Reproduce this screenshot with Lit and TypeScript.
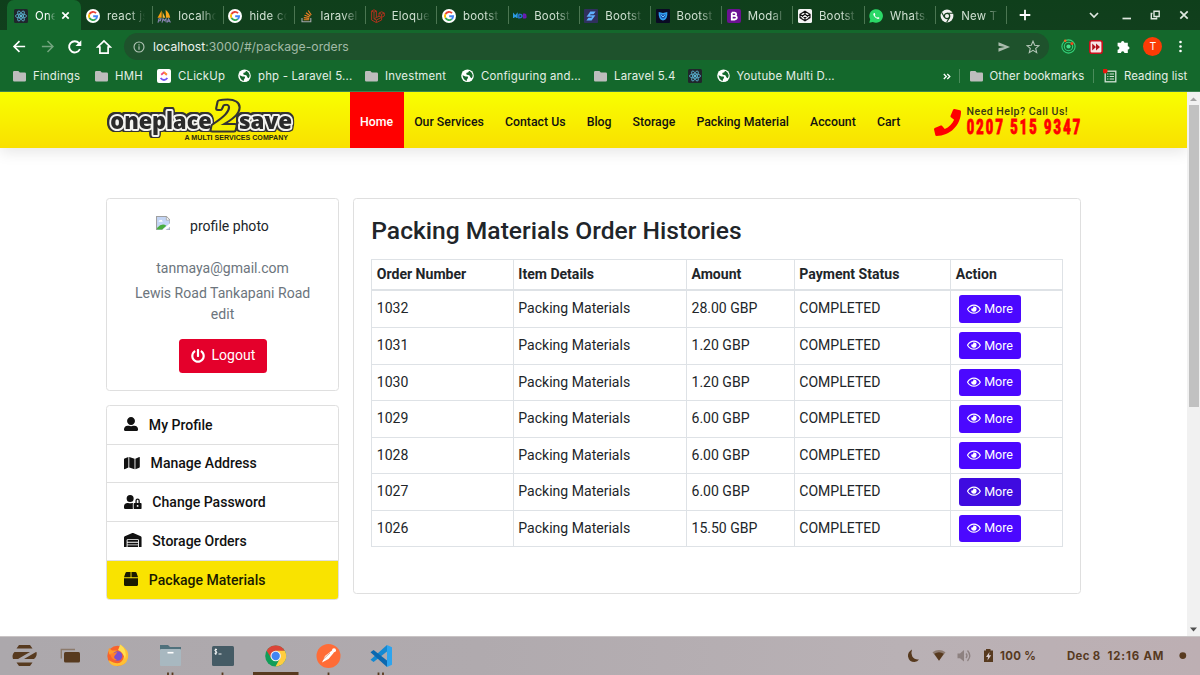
import { LitElement, html, css, svg } from "lit";
import { customElement } from "lit/decorators.js";

const FA: Record<string, [number, string]> = {
  user: [512, "M256 288c79.5 0 144-64.5 144-144S335.5 0 256 0 112 64.5 112 144s64.5 144 144 144zm128 32h-55.1c-22.2 10.2-46.9 16-72.9 16s-50.6-5.8-72.9-16H128C57.3 320 0 377.3 0 448v16c0 26.5 21.5 48 48 48h416c26.5 0 48-21.5 48-48v-16c0-70.7-57.3-128-128-128z"],
  phone: [512, "M493.4 24.6l-104-24c-11.3-2.6-22.9 3.3-27.5 13.9l-48 112c-4.2 9.8-1.4 21.3 6.9 28l60.6 49.6c-36 76.7-98.9 140.5-177.2 177.2l-49.6-60.6c-6.8-8.3-18.2-11.1-28-6.9l-112 48C3.9 366.5-2 378.1.6 389.4l24 104C27.1 504.2 36.7 512 48 512c256.1 0 464-207.5 464-464 0-11.2-7.7-20.9-18.6-23.4z"],
  map: [576, "M0 117.66v346.32c0 11.32 11.43 19.06 21.94 14.86L160 416V32L20.12 87.95A32.006 32.006 0 0 0 0 117.66zM192 416l192 64V96L192 32v384zM554.06 33.16L416 96v384l139.88-55.95A31.996 31.996 0 0 0 576 394.34V48.02c0-11.32-11.43-19.06-21.94-14.86z"],
  lock: [640, "M224 256A128 128 0 1 0 96 128a128 128 0 0 0 128 128zm96 64a63.08 63.08 0 0 1 8.1-30.5c-4.8-.5-9.5-1.5-14.5-1.5h-16.7a174.08 174.08 0 0 1-145.8 0h-16.7A134.43 134.43 0 0 0 0 422.4V464a48 48 0 0 0 48 48h280.9a63.54 63.54 0 0 1-8.9-32zm288-32h-32v-80a80 80 0 0 0-160 0v80h-32a32 32 0 0 0-32 32v160a32 32 0 0 0 32 32h224a32 32 0 0 0 32-32V320a32 32 0 0 0-32-32zM496 432a32 32 0 1 1 32-32 32 32 0 0 1-32 32zm32-144h-64v-80a32 32 0 0 1 64 0z"],
  warehouse: [640, "M504 352H136.4c-4.4 0-8 3.6-8 8l-.1 48c0 4.4 3.6 8 8 8H504c4.4 0 8-3.6 8-8v-48c0-4.4-3.6-8-8-8zm0 96H136.1c-4.4 0-8 3.6-8 8l-.1 48c0 4.4 3.6 8 8 8h368c4.4 0 8-3.6 8-8v-48c0-4.4-3.6-8-8-8zm0-192H136.6c-4.4 0-8 3.6-8 8l-.1 48c0 4.4 3.6 8 8 8H504c4.4 0 8-3.6 8-8v-48c0-4.4-3.6-8-8-8zm106.5-139L338.4 3.7a48.15 48.15 0 0 0-36.9 0L29.5 117C11.7 124.5 0 141.9 0 161.3V504c0 4.4 3.6 8 8 8h80c4.4 0 8-3.6 8-8V256c0-17.6 14.6-32 32.6-32h382.8c18 0 32.6 14.4 32.6 32v248c0 4.4 3.6 8 8 8h80c4.4 0 8-3.6 8-8V161.3c0-19.4-11.7-36.8-29.5-44.3z"],
  box: [512, "M509.5 184.6L458.9 32.8C452.4 13.2 434.1 0 413.4 0H272v192h238.7c-.4-2.5-.4-5-1.2-7.4zM240 0H98.6c-20.7 0-39 13.2-45.5 32.8L2.5 184.6c-.8 2.4-.8 4.9-1.2 7.4H240V0zM0 224v240c0 26.5 21.5 48 48 48h416c26.5 0 48-21.5 48-48V224H0z"],
  power: [512, "M400 54.1c63 45 104 118.6 104 201.9 0 136.8-110.8 247.7-247.5 248C120 504.3 8.2 393 8 256.4 7.9 173.1 48.9 99.3 111.8 54.2c11.7-8.3 28-4.8 35 7.7L162.6 90c5.9 10.5 3.1 23.8-6.6 31-41.5 30.8-68 79.6-68 134.9-.1 92.3 74.5 168.1 168 168.1 91.6 0 168.6-74.2 168-169.1-.3-51.8-24.7-101.8-68.1-134-9.7-7.2-12.4-20.5-6.5-30.9l15.8-28.1c7-12.4 23.2-16.1 34.8-7.8zM296 264V24c0-13.3-10.7-24-24-24h-32c-13.3 0-24 10.7-24 24v240c0 13.3 10.7 24 24 24h32c13.3 0 24-10.7 24-24z"],
  eye: [576, "M288 144a110.94 110.94 0 0 0-31.24 5 55.4 55.4 0 0 1 7.24 27 56 56 0 0 1-56 56 55.4 55.4 0 0 1-27-7.24A111.71 111.71 0 1 0 288 144zm284.52 97.4C518.29 135.59 410.93 64 288 64S57.68 135.64 3.48 241.41a32.35 32.35 0 0 0 0 29.19C57.71 376.41 165.07 448 288 448s230.32-71.64 284.52-177.41a32.35 32.35 0 0 0 0-29.19zM288 400c-98.65 0-189.09-55-237.93-144C98.91 167 189.34 112 288 112s189.09 55 237.93 144C477.1 345 386.66 400 288 400z"],
};
const fa = (name: string, size: number) => html`<svg width=${(FA[name][0] / 512) * size} height=${size} viewBox="0 0 ${FA[name][0]} 512" fill="currentColor"><path d=${FA[name][1]}></path></svg>`;

const ic = (body: unknown, w = 14, h = 14, vb = "0 0 14 14") => html`<svg width=${w} height=${h} viewBox=${vb} fill="none">${body}</svg>`;

const G: Record<string, unknown> = {
  react: svg`<rect width="14" height="14" rx="1.5" fill="#20262c"/><g stroke="#5cb8d6" stroke-width=".8"><ellipse cx="7" cy="7" rx="5.6" ry="2.1"/><ellipse cx="7" cy="7" rx="5.6" ry="2.1" transform="rotate(60 7 7)"/><ellipse cx="7" cy="7" rx="5.6" ry="2.1" transform="rotate(120 7 7)"/></g><circle cx="7" cy="7" r="1.2" fill="#5cb8d6"/>`,
  google: svg`<circle cx="7" cy="7" r="7" fill="#fff"/><g stroke-width="1.9"><path d="M10 4.2A4.1 4.1 0 0 0 3.5 4.9" stroke="#ea4335"/><path d="M3.5 4.9A4.1 4.1 0 0 0 3.5 9.1" stroke="#fbbc05"/><path d="M3.5 9.1A4.1 4.1 0 0 0 9.7 10.1" stroke="#34a853"/><path d="M9.7 10.1A4.1 4.1 0 0 0 11.1 7.2H7.2" stroke="#4285f4"/></g>`,
  pma: svg`<path d="M.5 8.8L4.7 1.2V8.8Z" fill="#f89c0e"/><path d="M5.6 8.8V3L8.4 8.8Z" fill="#f6b73c"/><path d="M9 8.8L8.6.8Q12.5 4 13.2 8.8Z" fill="#f8a51b"/><path d="M1 13.6L2 9.8H4L3.3 11.8H2M5 13.6L6 9.8L7.3 11.6L9 9.8V13.2M10 13.6L11.6 9.8L13.4 13.4M10.6 12.2H13" stroke="#8b86b5" stroke-width="1.1"/>`,
  so: svg`<path d="M2 9V12.8H10.8V9" stroke="#a7a9ac" stroke-width="1.1"/><g stroke="#f48024" stroke-width="1.1"><path d="M3.7 10.8H9.2M3.8 8.6L9.2 9.4M4.5 6.2L9.6 8M6 3.7L10.4 7M8.2 1.5L11.3 6"/></g>`,
  laravel: svg`<g stroke="#a8321d" stroke-width="1"><path d="M.6 2L3 .8L5.4 2V8.6L8 7.2V4L10.6 2.8L13.3 4V7L10.6 8.4V11L5.4 13.6L.6 11Z"/><path d="M.6 2L3 3.2L5.4 2M3 3.2V9.8L5.4 11L10.6 8.4L8 7.2M8 4L10.6 5.4L13.3 4M10.6 5.4V8.4M5.4 11V13.6M3 9.8L5.4 8.6"/></g>`,
  mdb: svg`<g stroke-width="1.5"><path d="M.7 9V5.4L2.3 7.3L3.9 5.4V9" stroke="#2b9be0"/><path d="M5.8 5.3V8.7Q9 9 9 7Q9 5.2 5.8 5.3" stroke="#2670cf"/><path d="M10.7 5.3V8.7H12.2Q13.7 8 12.3 7H10.7H12.3Q13.3 6 12 5.3Z" stroke="#6b1bb5"/></g>`,
  bs: svg`<rect width="14" height="14" rx=".8" fill="#30305e"/><path d="M6.3 2.5H11.6L9.6 5.3H6.6L6 6.3H11.4L7.6 11.5H2.4L4.4 8.7H7.4L8 7.7H2.6Z" fill="#5fb0ff"/>`,
  shield: svg`<rect width="14" height="14" rx="1" fill="#0a0a24"/><path d="M2.7 3L7 4L11.3 3Q12 10.5 7 11.6Q2 10.5 2.7 3Z" fill="#2f9df0"/><path d="M4.2 5.4H9.8Q9.5 9 7 9.5Q4.5 9 4.2 5.4Z" fill="#1c4aa8"/><path d="M5.2 6.2L7 8L8.8 6.2" stroke="#71d3ff"/>`,
  b: svg`<rect width="14" height="14" rx="2" fill="#6b1192"/><path d="M4.8 3.7H7.5Q9.2 3.8 9.2 5.2Q9.2 6.7 7.5 6.8H4.8M7.6 6.8Q9.8 7 9.8 8.8Q9.7 10.4 7.6 10.5H4.8V3.7" stroke="#fff" stroke-width="1.8"/>`,
  codepen: svg`<rect width="14" height="14" rx="1.6" fill="#f4f4f4"/><path d="M7 2.2L12 5.3V8.7L7 11.8L2 8.7V5.3ZM2 5.3L7 8.7L12 5.3M2 8.7L7 5.3L12 8.7M7 2.2V5.3M7 8.7V11.8" stroke="#111" stroke-width="1.2"/>`,
  wa: svg`<path d="M.3 13.8L1.2 10.3A6.8 6.8 0 1 1 3.8 12.9Z" fill="#2bd867"/><path d="M4.9 3.9Q3.6 4.9 4.9 7.1Q6.6 9.7 9 10Q10.5 9.9 10.4 8.7L8.9 7.9L8.1 8.7Q6.4 8 5.8 6.2L6.3 5.4L5.7 3.9Z" fill="#fff"/>`,
  chrome: svg`<circle cx="7" cy="7" r="6.4" fill="#f1f1f1"/><circle cx="7" cy="7" r="2.7" stroke="#143e1c" stroke-width="1.3"/><path d="M7 4.2H13M4.5 8.4L1.7 3.5M9.5 8.4L6.7 13.3" stroke="#143e1c" stroke-width="1.1"/>`,
  folder: svg`<path d="M1.2 1H5.4L6.8 2.6H11.8Q13 2.6 13 3.8V10.3Q13 11.5 11.8 11.5H1.2Q0 11.5 0 10.3V2.2Q0 1 1.2 1Z" fill="#bdbdbd"/>`,
  clickup: svg`<rect width="14" height="14" rx="2" fill="#fff"/><path d="M4.2 5.8L7 3.4L9.8 5.8" stroke="#f0467e" stroke-width="1.8"/><path d="M7 3.4L9.8 5.8" stroke="#ff9b2f" stroke-width="1.8"/><path d="M3.6 9Q7 13 10.4 9" stroke="#7354f5" stroke-width="1.9"/>`,
  globe: svg`<circle cx="6.5" cy="6.8" r="6.3" fill="#fff"/><path d="M7.8 1.9Q8 3.2 6.8 3.6Q5.2 3.6 5.2 5Q5.6 6 7.4 5.9Q9 6 9 7.4Q9.2 8.6 10.8 9.2Q11.8 7.6 11.7 6Q10.8 3 8.6 1.9Z" fill="#14682c"/><path d="M1.6 6.3L4.4 7.6H6.6Q7.6 8.6 6.5 9.8Q5.6 10.4 5.8 11.9Q2 11.2 1.6 6.3Z" fill="#14682c"/>`,
};

const tabs: [string, string][] = [
  ["google", "react js"], ["pma", "localhost"], ["google", "hide co"], ["so", "laravel"], ["laravel", "Eloque"],
  ["google", "bootst"], ["mdb", "Bootst"], ["bs", "Bootst"], ["shield", "Bootst"], ["b", "Modal"], ["codepen", "Bootst"],
  ["wa", "Whats."], ["chrome", "New T"],
];
/* icon, label, slot width */
const bookmarks: [string, string, number][] = [
  ["folder", "Findings", 82], ["folder", "HMH", 62], ["clickup", "CLickUp", 81], ["globe", "php - Laravel 5...", 127],
  ["folder", "Investment", 96], ["globe", "Configuring and...", 133], ["folder", "Laravel 5.4", 94], ["react", "", 28.5],
  ["globe", "Youtube Multi D...", 140],
];
const nav = ["Home", "Our Services", "Contact Us", "Blog", "Storage", "Packing Material", "Account", "Cart"];
const orders: [string, string][] = [
  ["1032", "28.00 GBP"], ["1031", "1.20 GBP"], ["1030", "1.20 GBP"], ["1029", "6.00 GBP"], ["1028", "6.00 GBP"], ["1027", "6.00 GBP"], ["1026", "15.50 GBP"],
];
const menu: [string, string][] = [
  ["user", "My Profile"], ["map", "Manage Address"], ["lock", "Change Password"], ["warehouse", "Storage Orders"], ["box", "Package Materials"],
];

@customElement("browser-chrome")
class BrowserChrome extends LitElement {
  static styles = css`
    :host { display: block; height: 92px; background: #14682c; color: #e4efe6; font: 11.4px/14px Inter, sans-serif; letter-spacing: .19px; white-space: nowrap; }
    svg { display: block; flex: none; }
    .tabs { display: flex; height: 30px; background: linear-gradient(#0f3f1b, #113f1d); padding-left: 7px; }
    .tab { display: flex; flex: none; align-items: center; width: 71.2px; box-sizing: border-box; padding: 1px 0 0 5.5px; position: relative; letter-spacing: .25px; }
    .tab::after { content: ""; position: absolute; right: -1px; top: 6px; width: 1px; height: 18px; background: #4b7652; }
    .label { margin-left: 7px; width: 39px; overflow: hidden; color: #cfe0d1; mask-image: linear-gradient(90deg, #000 58%, transparent 98%); }
    .active { width: 73.5px; background: #14682c; border-radius: 7px 7px 0 0; padding-left: 7px; }
    .active::after { display: none; }
    .active .label { width: 21px; color: #fff; margin-right: 5px; }
    .plus { margin: 9px 0 0 13px; }
    .win { display: flex; margin-left: auto; padding: 7px 8px 0 0; gap: 13.3px; }
    .bar { display: flex; align-items: center; height: 33px; padding-left: 12px; }
    .navs { display: flex; gap: 12.5px; width: 112px; align-items: center; }
    .omni { display: flex; align-items: center; width: 925px; height: 27px; box-sizing: border-box; border-radius: 14px; background: #1e522c; padding: 0 9px; font-size: 12.2px; letter-spacing: .02px; color: #a2bba7; }
    .omni b { font-weight: 400; color: #eef4ef; }
    .url { margin: 0 auto 0 8px; }
    .ext { display: flex; align-items: center; gap: 13.3px; padding-left: 11.5px; }
    .avatar { width: 19px; height: 19px; border-radius: 50%; background: #fb3b05; color: #fff; text-align: center; font-size: 10.5px; line-height: 19px; }
    .marks { display: flex; align-items: center; height: 29px; padding: 0 0 2px 13px; border-bottom: 1px solid #3c8350; box-sizing: border-box; }
    .mark { display: flex; align-items: center; gap: 7px; flex: none; }
    .more { margin-left: auto; display: flex; align-items: center; letter-spacing: .1px; }
    .sep { width: 1px; height: 14px; background: #4a8c5b; }
    .gap { width: 15.5px; }
    .s1 { margin: 0 10px 0 8px; }
    .s2 { margin-right: 9px; }
    .other { width: 123.5px; }
    .reading { width: 97px; }
  `;
  render() {
    return html`
      <div class="tabs">
        <div class="tab active">${ic(G.react)}<span class="label">One</span>${ic(svg`<path d="M1.2 1.2L7.2 7.2M7.2 1.2L1.2 7.2" stroke="#fff" stroke-width="1.6"/>`, 9, 9, "0 0 8.4 8.4")}</div>
        ${tabs.map(([i, t]) => html`<div class="tab">${ic(G[i])}<span class="label">${t}</span></div>`)}
        <div class="plus">${ic(svg`<path d="M6 .7V11.3M.7 6H11.3" stroke="#fff" stroke-width="1.8"/>`, 12, 12, "0 0 12 12")}</div>
        <div class="win">
          ${ic(svg`<path d="M4 6L8 10L12 6" stroke="#dfe8e0" stroke-width="1.7"/>`, 16, 16, "0 0 16 16")}
          ${ic(svg`<path d="M7.5 11.5H16" stroke="#dfe8e0" stroke-width="1.7"/>`, 18, 16, "0 0 18 16")}
          ${ic(svg`<path d="M7 4.3H12.2V9.5H7ZM5.5 6.5H4.3V11.8H9.6V10.5" stroke="#dfe8e0" stroke-width="1.4"/>`, 16, 16, "0 0 16 16")}
          ${ic(svg`<path d="M4.3 4.3L11.7 11.7M11.7 4.3L4.3 11.7" stroke="#dfe8e0" stroke-width="1.7"/>`, 16, 16, "0 0 16 16")}
        </div>
      </div>
      <div class="bar">
        <div class="navs">
          ${ic(svg`<path d="M14 8H2.5M8 2.2L2.2 8L8 13.8" stroke="#fff" stroke-width="1.8"/>`, 15, 15, "0 0 16 16")}
          ${ic(svg`<path d="M2 8H13.5M8 2.2L13.8 8L8 13.8" stroke="#73a57f" stroke-width="1.6"/>`, 15, 15, "0 0 16 16")}
          ${ic(svg`<path d="M12.9 10A5.6 5.6 0 1 1 12 4.2" stroke="#fff" stroke-width="1.9"/><path d="M14.3 1.2V7H8.5Z" fill="#fff"/>`, 16, 16, "0 0 16 16")}
          ${ic(svg`<path d="M8 1.9L1.8 8H3.9V14.2H12.1V8H14.2Z" stroke="#fff" stroke-width="1.7"/>`, 16, 16, "0 0 16 16")}
        </div>
        <div class="omni">
          ${ic(svg`<circle cx="6.5" cy="6.5" r="5.4" stroke="#b4c6b8" stroke-width="1.2"/><path d="M6.5 5.8V9.4M6.5 3.4V4.8" stroke="#b4c6b8" stroke-width="1.3"/>`, 12, 12, "0 0 13 13")}
          <span class="url"><b>localhost</b>:3000/#/package-orders</span>
          ${ic(svg`<path d="M.5 1L12.5 6L.5 11V7.2L7 6L.5 4.8Z" fill="#a9bcac"/>`, 12.5, 12, "0 0 13 12")}
          <span class="gap"></span>
          ${ic(svg`<path d="M7 1.2L8.7 5.2L13 5.6L9.7 8.4L10.7 12.6L7 10.4L3.3 12.6L4.3 8.4L1 5.6L5.3 5.2Z" stroke="#b4c6b8" stroke-width="1.1"/>`, 14, 14)}
        </div>
        <div class="ext">
          ${ic(svg`<circle cx="7.5" cy="7.5" r="6.6" stroke="#34d17a" stroke-width="1.1"/><circle cx="7.5" cy="7.5" r="4.2" stroke="#34d17a" stroke-width="1.1"/><circle cx="7.5" cy="7.5" r="2.1" fill="#49e08d"/><circle cx="4.2" cy="1.8" r="1.3" fill="#f06a22"/><circle cx="11" cy="4.5" r="1.5" fill="#f0451f"/>`, 15, 15, "0 0 15 15")}
          ${ic(svg`<rect x=".8" y=".8" width="12.4" height="12.4" rx="2" fill="#f6e5e5" stroke="#c8101b" stroke-width="1.6"/><path d="M3.2 3.6L7 7L3.2 10.4ZM7 3.6L11 7L7 10.4Z" fill="#b4121b"/>`, 14, 14)}
          ${ic(svg`<path d="M5 2.8A1.7 1.7 0 0 1 8.4 2.8H11.8V6.2A1.7 1.7 0 0 1 11.8 9.6V13H8.4A1.6 1.6 0 0 0 5 13H1.6V9.8A1.7 1.7 0 0 0 1.6 6.2V2.8Z" fill="#fff"/>`, 14, 14)}
          <div class="avatar">T</div>
          ${ic(svg`<g fill="#fff"><circle cx="4.5" cy="2" r="1.3"/><circle cx="4.5" cy="6.5" r="1.3"/><circle cx="4.5" cy="11" r="1.3"/></g>`, 8, 13, "0 0 8 13")}
        </div>
      </div>
      <div class="marks">
        ${bookmarks.map(([i, t, w]) => html`<div class="mark" style="width:${w}px">${i === "folder" ? ic(G[i], 13, 13, "0 0 13 13") : i === "globe" ? ic(G[i], 13, 14, "0 0 13 14") : ic(G[i])}<span>${t}</span></div>`)}
        <div class="more">
          ${ic(svg`<path d="M.8 1L3.3 3.5L.8 6M4.3 1L6.8 3.5L4.3 6" stroke="#fff" stroke-width="1.3"/>`, 8, 7, "0 0 8 7")}
          <span class="sep s1"></span>
          <div class="mark other">${ic(G.folder, 13, 13, "0 0 13 13")}<span>Other bookmarks</span></div>
          <span class="sep s2"></span>
          <div class="mark reading">${ic(svg`<rect x="2.2" y="2.2" width="10.6" height="10.6" stroke="#d3e3d6" stroke-width="1.3"/><path d="M4.2 5H5.4M4.2 7.5H5.4M4.2 10H5.4M6.6 5H11M6.6 7.5H11M6.6 10H11" stroke="#d3e3d6" stroke-width="1.1"/><circle cx="2.2" cy="2" r="2.4" fill="#e8150d"/>`)}<span>Reading list</span></div>
        </div>
      </div>`;
  }
}

@customElement("site-page")
class SitePage extends LitElement {
  static styles = css`
    :host { display: grid; grid-template-columns: 1187px 13px; height: 544px; background: #fff; font: 14.05px/21px Roboto, sans-serif; color: #212529; }
    svg { display: block; flex: none; }
    .header { display: flex; height: 55.5px; background: linear-gradient(#f9ff00, #f9e000); box-shadow: 0 4px 14px rgba(0,0,0,.1); padding-left: 104px; position: relative; }
    .main { overflow: hidden; }
    .logo { width: 245.5px; }
    .word { paint-order: stroke; filter: drop-shadow(1.3px 0 0 #333) drop-shadow(-1.3px 0 0 #333) drop-shadow(0 1.3px 0 #333) drop-shadow(0 -1.3px 0 #333); }
    .nav { display: flex; font-size: 12.3px; font-weight: 500; color: #111; line-height: 61px; }
    .nav span { padding: 0 10.55px; }
    .nav .on { background: #f00; color: #fff; }
    .help { display: flex; margin-left: 23px; color: #f00; }
    .help > svg:first-child { margin-top: 17px; }
    .body { display: grid; grid-template-columns: 232.5px 728.5px; column-gap: 14px; padding: 50.3px 0 0 106.3px; align-items: start; }
    .card { border: 1px solid #dfdfdf; border-radius: 3.5px; box-sizing: border-box; background: #fff; }
    .profile { height: 193px; margin-bottom: 14px; text-align: center; color: #6c757d; }
    .photo { display: flex; align-items: flex-start; padding: 17px 0 0 48.5px; height: 52px; box-sizing: border-box; color: #212529; }
    .photo span { margin-left: 19.8px; }
    .mail { padding-top: 7px; }
    .addr { padding-top: 4px; }
    .logout { display: flex; align-items: center; gap: 7px; width: 88px; height: 34px; box-sizing: border-box; padding: 0 0 .5px 12px; margin: 14px auto 0; background: #e4002b; color: #fff; border-radius: 3.5px; }
    .item { display: flex; align-items: center; height: 37.75px; padding-left: 17px; border-bottom: 1px solid #dfdfdf; font-weight: 500; color: #111; }
    .item svg { margin: 0 10.5px 1px 0; }
    .item span { padding-top: 1px; }
    .item:last-child { border: 0; background: #f9e300; color: #1a1a00; }
    .menu { overflow: hidden; }
    .orders { height: 396.5px; padding: 16px 17.5px; }
    h3 { font: 500 24.62px/32px Roboto, sans-serif; margin: 0 0 12px; }
    .row { display: grid; grid-template-columns: 141.5px 173.2px 107.8px 156.5px 1fr; height: 36.56px; box-sizing: border-box; border-bottom: 1px solid #dee2e6; border-left: 1px solid #dee2e6; width: 691.5px; }
    .row > * { border-right: 1px solid #dee2e6; padding: 7px 0 0 4.5px; }
    .head { height: 32.65px; font-weight: 700; border-top: 1px solid #dee2e6; border-bottom: 2px solid #dee2e6; }
    .head > * { padding-top: 4.6px; }
    .row .act { padding: 4px 0 0 7.8px; }
    .btn { display: flex; align-items: center; gap: 3.3px; width: 62px; height: 27.5px; box-sizing: border-box; padding: 0 0 1px 8px; background: #4b08ff; color: #fff; border-radius: 3px; font-size: 12.5px; line-height: 19px; }
    .focus { background: #3f0be0; }
    .scroll { background: #f1f1f1; display: flex; flex-direction: column; align-items: center; }
    .thumb { width: 10px; height: 302px; background: #c1c1c1; margin: 2px 0 auto; }
  `;
  render() {
    return html`
      <div class="main">
        <div class="header">
          <svg class="logo" width="245.5" height="55" viewBox="104 92 245.5 55" stroke-linejoin="round" font-family="Open Sans, sans-serif" font-weight="800">
            <g class="word" fill="#2b2b2b" stroke="#f4f4f0" stroke-width="4"><text x="110.3" y="129.3" font-size="23.5" textLength="101.5" lengthAdjust="spacingAndGlyphs">oneplace</text><text x="239" y="129.3" font-size="23.5" textLength="53" lengthAdjust="spacingAndGlyphs">save</text></g>
            <text x="213" y="130" font-family="Liberation Serif, serif" font-style="italic" font-weight="700" font-size="45" textLength="26" lengthAdjust="spacingAndGlyphs" fill="#f4f000" stroke="#333" stroke-width="5" paint-order="stroke">2</text>
            <text x="213" y="130" font-family="Liberation Serif, serif" font-style="italic" font-weight="700" font-size="45" textLength="26" lengthAdjust="spacingAndGlyphs" fill="none" stroke="#f4f000" stroke-width="1.2" aria-hidden="true">2</text>
            <text x="184.5" y="139.8" font-family="Liberation Sans, sans-serif" font-weight="700" font-size="7.2" textLength="103.5" lengthAdjust="spacingAndGlyphs" fill="#2b2b10">A MULTI SERVICES COMPANY</text>
          </svg>
          <div class="nav">${nav.map((n, i) => html`<span class=${i ? "" : "on"}>${n}</span>`)}</div>
          <div class="help">${fa("phone", 27)}
            <svg width="130" height="55" viewBox="961 92 130 55" font-family="Roboto, sans-serif">
              <text x="966.6" y="115" font-size="10.6" font-weight="500" fill="#3a3a12" textLength="101" lengthAdjust="spacing">Need Help? Call Us!</text>
              <g transform="translate(966.8 133.6) scale(.64 1)"><text font-size="20" font-weight="900" fill="#f00" stroke="#f00" stroke-width=".9" textLength="177" lengthAdjust="spacing">0207 515 9347</text></g>
            </svg>
          </div>
        </div>
        <div class="body">
          <div>
            <div class="card profile">
              <div class="photo">
                ${ic(svg`<path d="M.5 .5H10L13.5 4V13.5H.5Z" fill="#c3d5f5" stroke="#a0a0a0"/><path d="M10 .5V4H13.5Z" fill="#fff" stroke="#a0a0a0" stroke-width=".7"/><path d="M2.5 5.5Q2.7 4 4 4.2Q5.5 2.8 6.5 5.5Z" fill="#fff"/><path d="M1 13V11.5Q6 6 10 9.5L6 13Z" fill="#48ad3e"/><path d="M14 6.5L5.5 14H8.5L14 10Z" fill="#fff"/>`, 14.5, 14.5)}
                <span>profile photo</span>
              </div>
              <div class="mail">tanmaya@gmail.com</div>
              <div class="addr">Lewis Road Tankapani Road<br>edit</div>
              <div class="logout">${fa("power", 14)}<span>Logout</span></div>
            </div>
            <div class="card menu">${menu.map(([i, t]) => html`<div class="item">${fa(i, 14.05)}<span>${t}</span></div>`)}</div>
          </div>
          <div class="card orders">
            <h3>Packing Materials Order Histories</h3>
            <div class="row head"><div>Order Number</div><div>Item Details</div><div>Amount</div><div>Payment Status</div><div>Action</div></div>
            ${orders.map(([n, a], i) => html`<div class="row"><div>${n}</div><div>Packing Materials</div><div>${a}</div><div>COMPLETED</div><div class="act"><div class="btn ${i === 5 ? "focus" : ""}">${fa("eye", 12.3)}<span>More</span></div></div></div>`)}
          </div>
        </div>
      </div>
      <div class="scroll">
        <svg width="13" height="11" viewBox="0 0 13 11"><path d="M3 9L6.5 5.5L10 9Z" fill="#a3a3a3"/></svg>
        <div class="thumb"></div>
        <svg width="13" height="13" viewBox="0 0 13 13"><path d="M3 4.5L6.5 8.5L10 4.5Z" fill="#505050"/></svg>
      </div>`;
  }
}

@customElement("task-bar")
class TaskBar extends LitElement {
  static styles = css`
    :host { display: flex; height: 39px; box-sizing: border-box; border-top: 1px solid #c9c4c5; background: linear-gradient(90deg, #aca8ac, #b0aaae 40%, #b9b1b5 75%, #bdafb3); color: #573a1f; font: 700 11.4px/37px Inter, sans-serif; white-space: nowrap; }
    svg { display: block; }
    .apps { display: flex; padding-left: 11px; }
    .tray { display: flex; align-items: center; margin-left: auto; letter-spacing: .35px; }
    .pct { width: 67px; }
    .day { width: 40.5px; }
    .time { width: 71px; letter-spacing: .85px; }
  `;
  render() {
    return html`
      <div class="apps">
        <svg width="405" height="38" viewBox="11 637 405 38" fill="none">
          <path d="M19 645H30L32.5 648.5H16.5ZM16.5 662.5H32.5L30 666H19ZM14.5 652H30L18 659H13Q11.5 655 14.5 652ZM36 652L24 659H34Q37.5 656 36.5 652Z" fill="#573a1f"/>
          <path d="M61.3 658.5V649.5H75" stroke="#8c7a6b" stroke-width="1.4"/><rect x="64" y="652" width="16" height="10.5" rx="1.5" fill="#573a1f"/>
          <circle cx="117.5" cy="656" r="10.2" fill="#f7632c"/><path d="M120 644.5Q130 650 128 658Q126 666 117 666Q110 666 108.5 660Q122 668 124 656Q123 650 119 649Z" fill="#ffc033"/><path d="M109 648L112 650.5H117L115 653.5L110 655Q107.5 652 109 648Z" fill="#ff9d2a"/><circle cx="117.5" cy="656" r="4.8" fill="#7a50d0"/><path d="M110 654L117.5 652L114.5 656Q113 658 117 660Q112 661 110 654Z" fill="#ff812c"/><path d="M118 650Q120 646 120.5 644.5Q128 651 125 659Q123 652 118 650Z" fill="#ffdf52"/>
          <path d="M160 645H168L170 647H181V652H160Z" fill="#50717c"/><rect x="160" y="649" width="21" height="17" rx="1" fill="#a8b8c0"/><path d="M167.5 652.7H173.5" stroke="#fff" stroke-width="1.6"/>
          <rect x="212" y="646" width="22" height="20" rx="1.5" fill="#455b65"/><path d="M217 649.5Q214.3 649 214.8 650.7Q217.3 651.5 216.8 653Q216 654 214.5 653.3M215.8 648.5V655M218.5 654H221.5" stroke="#fff" stroke-width=".9"/>
          <circle cx="275.7" cy="656" r="10.5" fill="#119d58"/><path d="M266.6 650.7A10.5 10.5 0 0 1 284.8 650.7L275.7 651.2L271.5 658.5Z" fill="#db4437"/><path d="M284.8 650.8A10.5 10.5 0 0 1 275.5 666.5L280 658.3L275.7 650.8Z" fill="#ffcd40"/><circle cx="275.7" cy="656" r="4.7" fill="#4285f4" stroke="#f1f1f1" stroke-width="1.1"/>
          <circle cx="328.5" cy="656" r="12" fill="#ff6c37"/><path d="M322 662.5L325 656L332 650.5L334 652.5L328.5 659Z" fill="#fff"/><circle cx="334" cy="650.2" r="2" fill="#fff"/><path d="M322.5 660L330 652.8" stroke="#d96b45" stroke-width=".7"/>
          <path d="M387 645L392 647.3V664.7L387 667Z" fill="#2da4ee"/><path d="M387 645V651.5L373.6 662L370.5 659.8Z" fill="#1489d2"/><path d="M387 667V660.5L373.6 650L370.5 652.2Z" fill="#0a68b0"/>
          <path d="M168 672.5V675M172.5 672.5V675M222.5 672.5V675M328.5 672.5V675M378.5 672.5V675M383 672.5V675" stroke="#573a1f" stroke-width="1.8"/><rect x="253" y="672" width="45.5" height="3" fill="#573a1f"/>
        </svg>
      </div>
      <div class="tray">
        <svg width="97" height="38" viewBox="903 637 97 38" fill="none">
          <path d="M912 649.5Q907.5 652 908 656.5Q909 662 914.5 662Q917.5 661.8 919 659.5Q914.5 660 912.3 656.5Q910.7 652.5 912 649.5Z" fill="#573a1f"/>
          <path d="M932.5 652.3Q939 647.7 945.5 652.3L939 660.5Z" fill="#8c7a6f"/><path d="M934.2 653.8Q939 650.8 943.8 653.8L939 660.8Z" fill="#573a1f"/>
          <g stroke="#8d8180" stroke-width="1.3"><path d="M966 653.5Q968 655.7 966 658M967.5 650.5Q972 655.7 967.5 661"/></g><path d="M957.5 653.5H960L964 650V661.5L960 658.3H957.5Z" fill="#8d8180"/>
          <path d="M984 650.5H986V649H990.5V650.5H993V662H984Z" fill="#573a1f"/><path d="M989.5 652L986 657H988L987.5 660.5L991.2 655.2H989Z" fill="#d8cdd0"/>
        </svg>
        <span class="pct">100 %</span>
        <span class="day">Dec 8</span>
        <span class="time">12:16 AM</span>
        <svg width="21.5" height="38" viewBox="0 0 21.5 38"><circle cx="3.8" cy="18.6" r="3.4" fill="#573a1f"/></svg>
      </div>`;
  }
}

@customElement("app-root")
class AppRoot extends LitElement {
  static styles = css`:host { display: flex; flex-direction: column; width: 1200px; height: 675px; overflow: hidden; }`;
  render() {
    return html`<browser-chrome></browser-chrome><site-page></site-page><task-bar></task-bar>`;
  }
}
